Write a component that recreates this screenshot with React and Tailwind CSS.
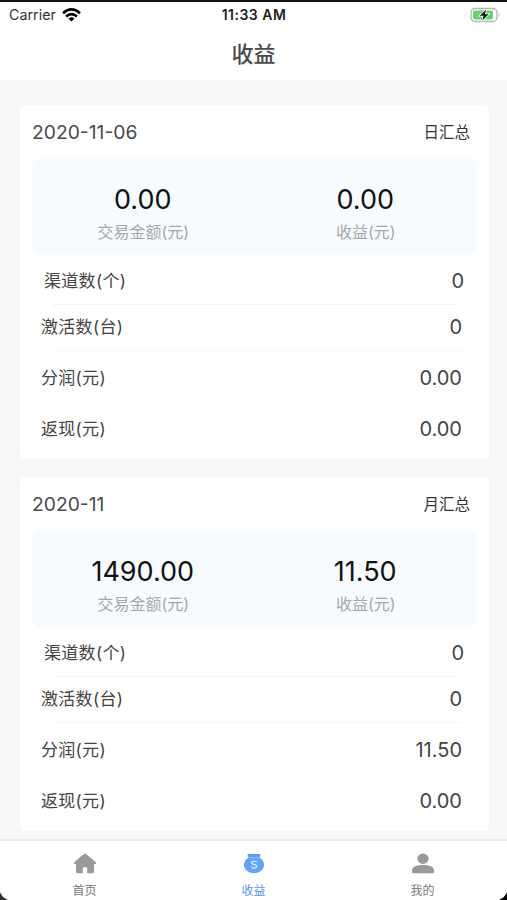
const summaries = [
  { date: "2020-11-06", label: "日汇总", amount: "0.00", income: "0.00", rows: ["0", "0", "0.00", "0.00"] },
  { date: "2020-11", label: "月汇总", amount: "1490.00", income: "11.50", rows: ["0", "0", "11.50", "0.00"] },
];

const rowStyles = [
  { name: "渠道数(个)", box: "h-[49px] pt-[3px] pl-[12px] pr-[13px]", line: "ml-[20px] mr-[20px] bg-[#f5f5f5]" },
  { name: "激活数(台)", box: "h-[45px] pb-[1px] pl-[9px] pr-[15px]", line: "ml-[20px] mr-[14px] bg-[#f7f7f7]" },
  { name: "分润(元)", box: "h-[47px] pt-[6px] pl-[9px] pr-[15px]", line: "ml-[20px] mr-[20px] bg-[#fcfcfc]" },
  { name: "返现(元)", box: "h-[50px] pt-[9px] pl-[9px] pr-[15px]", line: "" },
];

function Figure({ value, label }) {
  return (
    <div className="flex flex-1 flex-col items-center whitespace-nowrap pt-[26px] pr-[1px]">
      <div className="text-[27px] leading-[30px] text-[#111]">{value}</div>
      <div className="mt-[5px] pl-[1px] text-[16px] leading-[24px] text-[#a5a7a9]">{label}</div>
    </div>
  );
}

function Card({ data }) {
  return (
    <section className="h-[354px] rounded-[6px] bg-white px-[12px]">
      <div className="flex h-[54px] items-center justify-between pr-[7px] pt-[1px]">
        <span className="pb-[2px] text-[19.3px] leading-[24px] text-[#4a4a4a]">{data.date}</span>
        <span className="text-[15.5px] leading-[24px] text-[#333]">{data.label}</span>
      </div>
      <div className="flex h-[96px] rounded-[8px] bg-[#f7fbfe]">
        <Figure value={data.amount} label="交易金额(元)" />
        <Figure value={data.income} label="收益(元)" />
      </div>
      {rowStyles.map((row, i) => (
        <div key={row.name}>
          <div className={"flex items-center justify-between text-[#444] " + row.box}>
            <span className="text-[17px] leading-[24px] tracking-[0.3px]">{row.name}</span>
            <span className="text-[20px] leading-[24px]">{data.rows[i]}</span>
          </div>
          {row.line && <div className={"h-px " + row.line} />}
        </div>
      ))}
    </section>
  );
}

function HomeIcon() {
  return (
    <svg width="24" height="22" viewBox="0 0 24 22" fill="#999">
      <path d="M10.800 1q1.200-1 2.400 0L23.400 9.600q.9 1.500-.7 1.900H21.400v8q0 1.800-1.800 1.800h-5.300v-5.300q0-1.200-1.200-1.200h-2.200q-1.200 0-1.200 1.200v5.300H4.400q-1.800 0-1.800-1.800v-8H1.300Q-.3 11.100.6 9.600z" />
    </svg>
  );
}

function BagIcon() {
  return (
    <svg width="22" height="22" viewBox="0 0 22 22">
      <path d="M4.800 1h12.400q1 .2.500 1.200L16.900 5H5.100L4.300 2.200Q3.800 1.200 4.800 1z" fill="#5b9df5" />
      <path d="M5.500 4.800h11C20 6.700 21.500 9.400 21.500 12.400c0 5.300-4.700 8.800-10.500 8.800S.5 17.700.5 12.400c0-3 1.500-5.700 5-7.600z" fill="#62a2f7" />
      <path d="M5.800 4.600h10.400" stroke="#a9ccfb" strokeWidth=".6" />
      <path d="M13.800 9.800q-.6-1.300-2.700-1.300-2.600 0-2.600 1.700 0 1.400 2.600 1.800 2.800.4 2.800 2 0 1.800-2.800 1.800-2.300 0-2.900-1.500" fill="none" stroke="#cfe3fe" strokeWidth="1.500" />
    </svg>
  );
}

function UserIcon() {
  return (
    <svg width="24" height="22" viewBox="0 0 24 22" fill="#999">
      <ellipse cx="12" cy="6" rx="5.900" ry="5.400" />
      <path d="M.5 18.300c0-4 5-5.800 11.500-5.800s11.500 1.800 11.500 5.800v1.500q0 1.500-1.400 1.500H1.900Q.5 21.300.5 19.800z" />
    </svg>
  );
}

function Tab({ icon, label, color }) {
  return (
    <div className="flex flex-1 flex-col items-center pt-[12px]">
      {icon}
      <span className={"mt-[8px] text-[12px] leading-[18px] " + color}>{label}</span>
    </div>
  );
}

export default function App() {
  return (
    <div className="relative flex h-[900px] w-[507px] flex-col overflow-hidden bg-[#f7f7f7] font-['Inter','Noto_Sans_CJK_SC',sans-serif]">
      <header className="h-[80px] border-t-2 border-[#111] bg-white">
        <div className="grid h-[26px] grid-cols-3 items-center pl-[9px] pr-[6px] text-[#222]">
          <div className="flex items-center gap-[6px]">
            <span className="text-[14.3px] leading-[18px] text-[#333]">Carrier</span>
            <svg width="19" height="14" viewBox="0 0 19 14" fill="none" stroke="#000" strokeWidth="2.500">
              <path d="M1 5.200Q9.500-2.400 18 5.200M4 8.500q5.500-4.800 11 0" />
              <path d="M9.500 13.500L6.400 10.500q3.100-2.500 6.200 0z" fill="#000" stroke="none" />
            </svg>
          </div>
          <span className="whitespace-nowrap pr-[2px] text-center text-[14px] font-semibold leading-[18px] tracking-[0.5px]">11:33 AM</span>
          <svg className="justify-self-end" width="31" height="16" viewBox="0 0 31 16">
            <rect x="1" y="1.500" width="26" height="13" rx="4" fill="#fff" stroke="#b5b5b5" strokeWidth="1.300" />
            <path d="M28.700 5.500q1.800 2.500 0 5z" fill="#aaa" />
            <rect x="3" y="3.500" width="20" height="9" rx="2" fill="#65d36b" />
            <path d="M16.200 2.500L9.800 8.800h3.800l-1.300 4.700L18.600 7.200h-3.800z" fill="#111" stroke="#fff" strokeWidth="1.500" paintOrder="stroke" />
          </svg>
        </div>
        <h1 className="text-center text-[22px] font-medium leading-[52px] text-[#4a4a4a]">收益</h1>
      </header>

      <main className="flex flex-1 flex-col gap-[18px] pl-[20px] pr-[18px] pt-[25px]">
        {summaries.map((item) => (
          <Card key={item.date} data={item} />
        ))}
      </main>

      <nav className="flex h-[61px] border-t-2 border-[#e8e8e8] bg-white">
        <Tab icon={<HomeIcon />} label="首页" color="text-[#777]" />
        <Tab icon={<BagIcon />} label="收益" color="text-[#5794f2]" />
        <Tab icon={<UserIcon />} label="我的" color="text-[#777]" />
      </nav>

      <svg className="absolute bottom-0 left-0" width="8" height="8" viewBox="0 0 9 9">
        <path d="M0 0Q2 6 9 9H0z" fill="#333" />
      </svg>
      <svg className="absolute bottom-0 right-0" width="8" height="8" viewBox="0 0 9 9">
        <path d="M9 0Q7 6 0 9h9z" fill="#000" />
      </svg>
    </div>
  );
}
